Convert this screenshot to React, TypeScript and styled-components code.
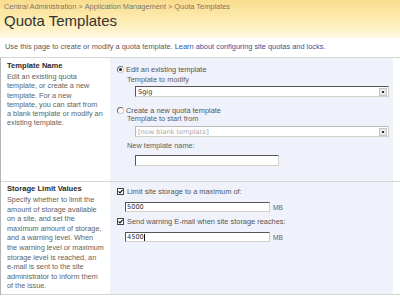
import React from "react";
import styled, { createGlobalStyle } from "styled-components";

const GlobalStyle = createGlobalStyle`
  html, body { margin: 0; padding: 0; background: #ffffff; }
  body { font-family: "Liberation Sans", Arial, sans-serif; width: 400px; overflow: hidden; }
`;

const Page = styled.div`
  width: 400px;
  height: 297px;
  overflow: hidden;
  background: #fff;
`;

const Header = styled.header`
  height: 38px;
  padding: 2px 0 0 4px;
  box-sizing: border-box;
  background: linear-gradient(#f9dd8e, #fdecb2 55%, #fff8e2);
`;

const Breadcrumb = styled.div`
  font-size: 7.4px;
  line-height: 10px;
  color: #7d7668;
  white-space: nowrap;
`;

const Sep = styled.span`
  margin: 0 2px;
`;

const Title = styled.h1`
  margin: 0;
  font-family: "Liberation Sans", Arial, sans-serif;
  font-weight: normal;
  font-size: 15px;
  line-height: 18px;
  color: #333;
  white-space: nowrap;
`;

const Intro = styled.p`
  margin: 4px 0 5px 5px;
  font-size: 7.4px;
  line-height: 10px;
  color: #595959;
  white-space: nowrap;
`;

const Link = styled.a`
  color: #2f54a0;
  text-decoration: none;
`;

const Form = styled.div`
  border-top: 1px solid #d6d6d6;
  border-left: 1px solid #b5b5b5;
`;

const Section = styled.section<{ $h: number }>`
  display: grid;
  grid-template-columns: 109px 283px 1fr;
  height: ${(p) => p.$h}px;
  border-bottom: 1px solid #d6d6d6;
`;

const Info = styled.div<{ $pt: number }>`
  padding: ${(p) => p.$pt}px 4px 0 6px;
`;

const SectionTitle = styled.div`
  font-size: 7.6px;
  line-height: 10px;
  font-weight: bold;
  color: #2a2a2a;
  margin-bottom: 1px;
`;

const Desc = styled.div<{ $lh: number }>`
  font-size: 7.3px;
  line-height: ${(p) => p.$lh}px;
  color: #626262;
  white-space: nowrap;
`;

const Controls = styled.div<{ $pt: number }>`
  background: #eff2fb;
  padding: ${(p) => p.$pt}px 0 0 7px;
  display: flex;
  flex-direction: column;
  align-items: flex-start;
`;

const OptionRow = styled.div<{ $mt?: number }>`
  display: flex;
  align-items: center;
  gap: 2px;
  height: 10px;
  margin-top: ${(p) => p.$mt ?? 0}px;
  font-size: 7.4px;
  color: #555;
  white-space: nowrap;
`;

const Radio = styled.span<{ $on?: boolean }>`
  width: 7px;
  height: 7px;
  box-sizing: border-box;
  border-radius: 50%;
  border: 1px solid #6b6b6b;
  border-right-color: #c9c9c9;
  border-bottom-color: #c9c9c9;
  background: #fff;
  display: flex;
  align-items: center;
  justify-content: center;
  &::after {
    content: "";
    width: 3px;
    height: 3px;
    border-radius: 50%;
    background: ${(p) => (p.$on ? "#222" : "transparent")};
  }
`;

const Box = styled.span`
  width: 7px;
  height: 7px;
  box-sizing: border-box;
  border: 1px solid #444;
  background: #fff;
  display: flex;
  align-items: center;
  justify-content: center;
  margin-right: 1px;
`;

const SubLabel = styled.div<{ $mt?: number; $indent: number }>`
  margin: ${(p) => p.$mt ?? 0}px 0 0 ${(p) => p.$indent}px;
  height: 10px;
  line-height: 10px;
  font-size: 7.4px;
  color: #5e5e5e;
  white-space: nowrap;
`;

const SelectBox = styled.div<{ $mt: number; $disabled?: boolean }>`
  margin: ${(p) => p.$mt}px 0 0 18px;
  width: 254px;
  height: 11px;
  box-sizing: border-box;
  background: #fff;
  border: 1px solid ${(p) => (p.$disabled ? "#b9b9b9" : "#555")};
  border-right-color: #d4d0c8;
  border-bottom-color: #d4d0c8;
  display: flex;
  align-items: center;
  justify-content: space-between;
  padding: 0 0 0 2px;
  font-family: "DejaVu Sans", sans-serif;
  font-size: 6.6px;
  color: ${(p) => (p.$disabled ? "#a8a8a8" : "#333")};
`;

const DropButton = styled.span`
  width: 8px;
  height: 8px;
  margin-right: 1px;
  box-sizing: border-box;
  border: 1px solid #c8c8c8;
  background: #e8e8e8;
  display: flex;
  align-items: center;
  justify-content: center;
  &::after {
    content: "";
    width: 2px;
    height: 2px;
    background: #333;
  }
`;

const TextBox = styled.div<{ $mt: number; $indent: number; $w: number; $h: number }>`
  margin: ${(p) => p.$mt}px 0 0 ${(p) => p.$indent}px;
  width: ${(p) => p.$w}px;
  height: ${(p) => p.$h}px;
  box-sizing: border-box;
  background: #fff;
  border: 1px solid #555;
  border-right-color: #d4d0c8;
  border-bottom-color: #d4d0c8;
  padding-left: 1px;
  font-family: "DejaVu Sans", sans-serif;
  font-size: 6.6px;
  line-height: 8px;
  color: #333;
  display: flex;
  align-items: center;
`;

const Caret = styled.span`
  display: inline-block;
  width: 1px;
  height: 7px;
  background: #111;
`;

const SizeRow = styled.div<{ $mt: number }>`
  display: flex;
  align-items: center;
  gap: 3px;
  margin: ${(p) => p.$mt}px 0 0 8px;
`;

const Unit = styled.span`
  font-size: 6.6px;
  color: #666;
  padding-top: 1px;
`;

const Check = () => (
  <svg width="5" height="5" viewBox="0 0 5 5">
    <path d="M0.5 2.4 L2 3.9 L4.6 0.8" fill="none" stroke="#111" strokeWidth="1.1" />
  </svg>
);

export default function App() {
  return (
    <Page>
      <GlobalStyle />
      <Header>
        <Breadcrumb>
          Central Administration<Sep>&gt;</Sep>Application Management<Sep>&gt;</Sep>Quota Templates
        </Breadcrumb>
        <Title>Quota Templates</Title>
      </Header>
      <Intro>
        Use this page to create or modify a quota template.{" "}
        <Link>Learn about configuring site quotas and locks.</Link>
      </Intro>
      <Form>
        <Section $h={123}>
          <Info $pt={3}>
            <SectionTitle>Template Name</SectionTitle>
            <Desc $lh={9.3}>
              Edit an existing quota
              <br />
              template, or create a new
              <br />
              template. For a new
              <br />
              template, you can start from
              <br />
              a blank template or modify an
              <br />
              existing template.
            </Desc>
          </Info>
          <Controls $pt={6}>
            <OptionRow>
              <Radio $on />
              Edit an existing template
            </OptionRow>
            <SubLabel $mt={1} $indent={10}>Template to modify</SubLabel>
            <SelectBox $mt={1}>
              Sgig
              <DropButton />
            </SelectBox>
            <OptionRow $mt={8}>
              <Radio />
              Create a new quota template
            </OptionRow>
            <SubLabel $mt={-1} $indent={10}>Template to start from</SubLabel>
            <SelectBox $mt={2} $disabled>
              [new blank template]
              <DropButton />
            </SelectBox>
            <SubLabel $mt={4} $indent={10}>New template name:</SubLabel>
            <TextBox $mt={4} $indent={18} $w={144} $h={11} />
          </Controls>
          <div />
        </Section>
        <Section $h={112}>
          <Info $pt={2}>
            <SectionTitle>Storage Limit Values</SectionTitle>
            <Desc $lh={9.6}>
              Specify whether to limit the
              <br />
              amount of storage available
              <br />
              on a site, and set the
              <br />
              maximum amount of storage,
              <br />
              and a warning level. When
              <br />
              the warning level or maximum
              <br />
              storage level is reached, an
              <br />
              e-mail is sent to the site
              <br />
              administrator to inform them
              <br />
              of the issue.
            </Desc>
          </Info>
          <Controls $pt={4}>
            <OptionRow>
              <Box>
                <Check />
              </Box>
              Limit site storage to a maximum of:
            </OptionRow>
            <SizeRow $mt={6}>
              <TextBox $mt={0} $indent={0} $w={145} $h={10}>5000</TextBox>
              <Unit>MB</Unit>
            </SizeRow>
            <OptionRow $mt={4}>
              <Box>
                <Check />
              </Box>
              Send warning E-mail when site storage reaches:
            </OptionRow>
            <SizeRow $mt={6}>
              <TextBox $mt={0} $indent={0} $w={145} $h={10}>
                4500
                <Caret />
              </TextBox>
              <Unit>MB</Unit>
            </SizeRow>
          </Controls>
          <div />
        </Section>
      </Form>
    </Page>
  );
}
